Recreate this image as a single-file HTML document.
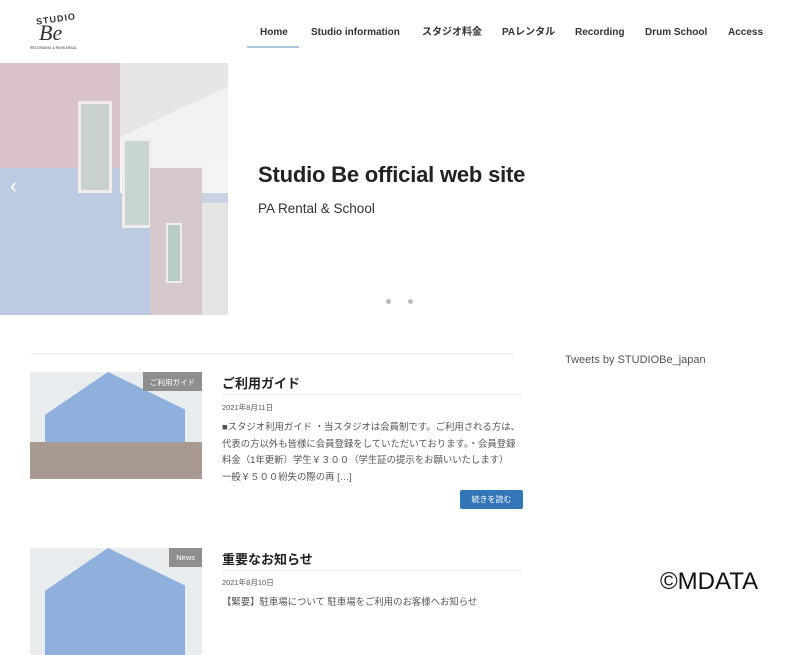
<!DOCTYPE html>
<html><head><meta charset="utf-8"><style>
*{margin:0;padding:0;box-sizing:border-box}
body{width:800px;height:600px;overflow:hidden;background:#fff;font-family:"Liberation Sans","Noto Sans CJK JP",sans-serif;color:#333;position:relative}
.nav a{position:absolute;top:27px;font-size:10px;line-height:12px;height:12px;font-weight:bold;color:#333;white-space:nowrap}
.nav a.j{top:27px}
.hero{position:absolute;left:0;top:63px;width:228px;height:252px;overflow:hidden;background:#c9d3e4}
.ab{position:absolute}
.thumb{position:absolute;left:30px;width:172px;height:107px;overflow:hidden;background:#e8ecef}
.tag{position:absolute;right:0;top:0;background:#8e8e8e;color:#fff;font-size:7.5px;padding:5px 7px;height:19px}
.t{position:absolute;left:222px;font-size:13px;font-weight:bold;color:#222}
.d{position:absolute;left:222px;font-size:7.5px;color:#555}
.p{position:absolute;left:222px;width:305px;font-size:9.4px;line-height:16.5px;color:#555}
</style></head><body>
<div class="ab" style="left:30px;top:12px;width:60px;height:40px">
<div style="font-size:9px;font-weight:bold;letter-spacing:1px;transform:rotate(-8deg);position:absolute;left:6px;top:2px">STUDIO</div>
<div style="font-family:'Liberation Serif',serif;font-style:italic;font-size:22px;position:absolute;left:9px;top:8px">Be</div>
<div style="position:absolute;left:0;top:34px;font-size:3.5px;white-space:nowrap">RECORDING &amp; REHEARSAL</div>
</div>
<div class="nav">
<a style="left:260px">Home</a><a style="left:311px">Studio information</a><a class="j" style="left:422px">スタジオ料金</a><a class="j" style="left:502px">PAレンタル</a><a style="left:575px">Recording</a><a style="left:645px">Drum School</a><a style="left:728px">Access</a>
</div>
<div class="ab" style="left:247px;top:46px;width:52px;height:2px;background:#a9c7dc"></div>
<div class="hero">
<div class="ab" style="left:0;top:0;width:228px;height:120px;background:#d9c3c8"></div>
<div class="ab" style="left:0;top:105px;width:150px;height:147px;background:#bccbe2"></div>
<div class="ab" style="left:120px;top:0;width:108px;height:130px;background:linear-gradient(155deg,#e7e5e6 40%,#f2f2f2 42%,#f4f4f4)"></div>
<div class="ab" style="left:78px;top:38px;width:34px;height:92px;background:#c8d1d0;border:3px solid #f0ecec"></div>
<div class="ab" style="left:122px;top:75px;width:30px;height:90px;background:#c8d4d2;border:3px solid #f0ecec"></div>
<div class="ab" style="left:150px;top:105px;width:52px;height:147px;background:#d7c8cc"></div>
<div class="ab" style="left:166px;top:160px;width:16px;height:60px;background:#b8cbc4;border:2px solid #eee"></div>
<div class="ab" style="left:202px;top:140px;width:26px;height:112px;background:#e6e3e3"></div>
<div class="ab" style="left:10px;top:110px;color:#fff;font-size:22px">‹</div>
</div>
<div class="ab" style="left:258px;top:162px;font-size:22px;font-weight:bold;color:#222;letter-spacing:-0.2px">Studio Be official web site</div>
<div class="ab" style="left:258px;top:201px;font-size:13.5px;color:#333">PA Rental &amp; School</div>
<div class="ab" style="left:386px;top:299px;width:5px;height:5px;border-radius:50%;background:#bbb"></div>
<div class="ab" style="left:408px;top:299px;width:5px;height:5px;border-radius:50%;background:#bbb"></div>
<div class="ab" style="left:30px;top:353px;width:485px;height:2px;background:#f4f4f4"></div>
<div class="ab" style="left:565px;top:354px;font-size:11px;color:#555">Tweets by STUDIOBe_japan</div>

<div class="thumb" style="top:372px"><div class="ab" style="left:15px;top:0;width:140px;height:107px;background:#8fb0dc;clip-path:polygon(0 40%,45% 0,100% 35%,100% 100%,0 100%)"></div><div class="ab" style="left:0;top:70px;width:172px;height:37px;background:#a89a90"></div><div class="tag">ご利用ガイド</div></div>
<div class="t" style="top:373px">ご利用ガイド</div>
<div class="ab" style="left:222px;top:394px;width:300px;height:1px;background:#f2f2f2"></div>
<div class="d" style="top:402px">2021年8月11日</div>
<div class="p" style="top:419px">■スタジオ利用ガイド ・当スタジオは会員制です。ご利用される方は、<br>代表の方以外も皆様に会員登録をしていただいております。・会員登録<br>料金（1年更新）学生￥３００（学生証の提示をお願いいたします）<br>一般￥５００紛失の際の再 […]</div>
<div class="ab" style="left:460px;top:490px;width:63px;height:19px;background:#3276b8;border-radius:2px;color:#fff;font-size:8px;text-align:center;line-height:19px">続きを読む</div>

<div class="thumb" style="top:548px"><div class="ab" style="left:15px;top:0;width:140px;height:107px;background:#8fb0dc;clip-path:polygon(0 40%,45% 0,100% 35%,100% 100%,0 100%)"></div><div class="tag">News</div></div>
<div class="t" style="top:549px">重要なお知らせ</div>
<div class="ab" style="left:222px;top:570px;width:300px;height:1px;background:#f2f2f2"></div>
<div class="d" style="top:577px">2021年8月10日</div>
<div class="p" style="top:594px;white-space:nowrap">【緊要】駐車場について 駐車場をご利用のお客様へお知らせ</div>
<div class="ab" style="left:660px;top:568px;font-size:24px;color:#111">©MDATA</div>
</body></html>
